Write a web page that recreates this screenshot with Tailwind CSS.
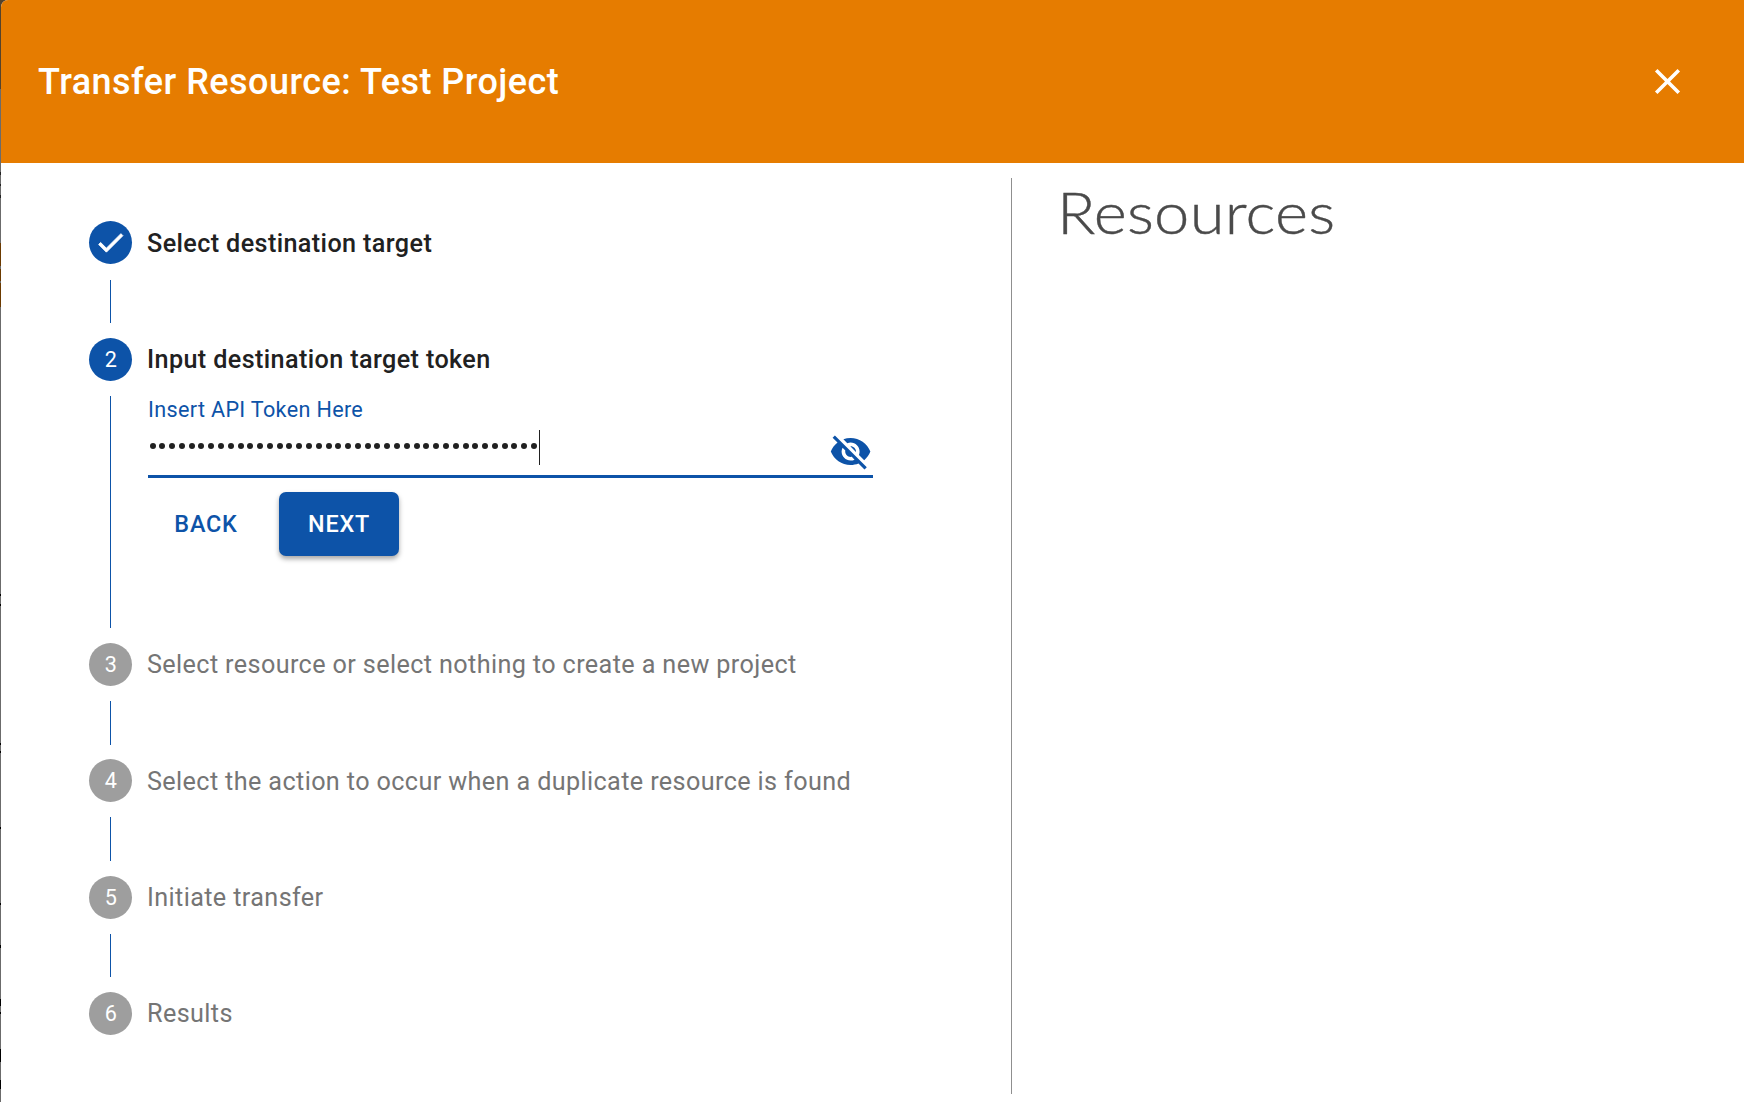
<!DOCTYPE html>
<html lang="en"><head><meta charset="utf-8"><title>Transfer Resource</title>
<script src="https://cdn.jsdelivr.net/npm/@tailwindcss/browser@4"></script></head>
<body class="h-[1102px] w-[1744px] overflow-hidden bg-[linear-gradient(#54432c_89px,#6b6b6b_89px_172px,#222_172px_175px,#6b6b6b_175px_184px,#222_184px_186px,#6b6b6b_186px_195px,#222_195px_198px,#6b6b6b_198px_243px,#6b3a00_243px_266px,#6b6b6b_266px_269px,#6b3a00_269px_281px,#6b6b6b_281px_283px,#6b3a00_283px_307px,#6b6b6b_307px_594px,#000_594px_596px,#6b6b6b_596px_604px,#000_604px_606px,#6b6b6b_606px_743px,#000_743px_745px,#6b6b6b_745px_751px,#000_751px_753px,#6b6b6b_753px_827px,#000_827px_829px,#6b6b6b_829px_903px,#000_903px_905px,#6b6b6b_905px_945px,#000_945px_948px,#6b6b6b_948px_999px,#000_999px_1006px,#6b6b6b_1006px_1012px,#000_1012px_1014px,#6b6b6b_1014px_1049px,#000_1049px_1062px,#6b6b6b_1062px_1080px,#000_1080px_1089px,#6b6b6b_1089px)] pl-px font-['Roboto',sans-serif]">
<div class="flex h-full flex-col overflow-hidden rounded-tl-[7px] bg-white">
<header class="flex h-[163px] shrink-0 items-center justify-between bg-[#e67c00] pr-[55.5px] pl-[37px] text-white">
<h1 class="text-[36px] leading-none font-medium tracking-[0.47px]">Transfer Resource: Test Project</h1>
<svg class="size-[43px]" viewBox="0 0 24 24" fill="currentColor"><path d="M19 6.41 17.59 5 12 10.59 6.41 5 5 6.41 10.59 12 5 17.59 6.41 19 12 13.41 17.59 19 19 17.59 13.41 12z"/></svg>
</header>
<main class="flex grow">
<section class="flex w-[1010px] flex-col pt-[58px] pl-[88px] text-[25.2px] leading-[43px] tracking-[0.38px] text-[#757575]">
<div class="flex h-[117px]">
<div class="flex w-[43px] flex-col items-center"><span class="flex size-[43.2px] items-center justify-center rounded-full bg-[#0d53a8] text-white"><svg class="size-[33px]" viewBox="0 0 24 24" fill="currentColor" stroke="currentColor" stroke-width=".7"><path d="M9 16.17 4.83 12l-1.42 1.41L9 19 21 7l-1.41-1.41z"/></svg></span><i class="mt-4 h-[43px] w-px bg-[#0d53a8]"></i></div>
<span class="ml-[15px] pt-px font-medium text-[#212121]">Select destination target</span></div>
<div class="flex h-[305px]">
<div class="flex w-[43px] flex-col items-center"><span class="size-[43px] rounded-full bg-[#0d53a8] pl-px text-center text-[21.6px] text-white">2</span><i class="mt-[15px] h-[232px] w-px bg-[#0d53a8]"></i></div>
<div class="ml-[15px]"><div class="font-medium text-[#212121]">Input destination target token</div>
<div class="ml-px flex h-[97px] w-[725px] justify-between border-b-3 border-[#0d53a8]">
<div><div class="mt-[14px] h-[29px] text-[21.6px] leading-[29px] tracking-[0.33px] text-[#0d53a8]">Insert API Token Here</div>
<div class="mt-[6px] flex h-[35px] items-center"><div class="flex gap-[3.79px] pb-[3px] pl-[1.5px]" id="dots"></div><i class="ml-[2.5px] h-[35px] w-px bg-[#212121]"></i></div></div>
<svg class="mt-[49px] mr-[0.5px] size-[43.2px]" viewBox="0 0 24 24" fill="#0d53a8"><path d="M12 7c2.76 0 5 2.24 5 5 0 .65-.13 1.26-.36 1.83l2.92 2.92c1.51-1.26 2.7-2.89 3.43-4.75-1.73-4.39-6-7.5-11-7.5-1.4 0-2.74.25-3.98.7l2.16 2.16C10.74 7.13 11.35 7 12 7M2 4.27l2.28 2.28.46.46C3.08 8.3 1.78 10.02 1 12c1.73 4.39 6 7.5 11 7.5 1.55 0 3.03-.3 4.38-.84l.42.42L19.73 22 21 20.73 3.27 3zM7.53 9.8l1.55 1.55c-.05.21-.08.43-.08.65 0 1.66 1.34 3 3 3 .22 0 .44-.03.65-.08l1.55 1.55c-.67.33-1.41.53-2.2.53-2.76 0-5-2.24-5-5 0-.79.2-1.53.53-2.2m4.31-.78 3.15 3.15.02-.16c0-1.66-1.34-3-3-3z"/></svg>
</div>
<div class="mt-[14px] flex text-[23.4px] font-medium tracking-[0.8px]"><button class="h-16 w-[118px] text-[#0d53a8]">BACK</button><button class="ml-[14px] h-16 w-[120px] rounded-[7px] bg-[#0d53a8] text-white shadow-[0_3px_5px_rgba(0,0,0,.35)]">NEXT</button></div>
</div></div>
<div class="flex h-[116px]">
<div class="flex w-[43px] flex-col items-center"><span class="size-[43px] rounded-full bg-[#9e9e9e] pl-px text-center text-[21.6px] text-white">3</span><i class="mt-[15px] h-[44px] w-px bg-[#0d53a8]"></i></div>
<span class="ml-[15px]">Select resource or select nothing to create a new project</span></div>
<div class="flex h-[117px]">
<div class="flex w-[43px] flex-col items-center"><span class="size-[43px] rounded-full bg-[#9e9e9e] pl-px text-center text-[21.6px] text-white">4</span><i class="mt-[15px] h-[44px] w-px bg-[#0d53a8]"></i></div>
<span class="ml-[15px] pt-px">Select the action to occur when a duplicate resource is found</span></div>
<div class="flex h-[116px]">
<div class="flex w-[43px] flex-col items-center"><span class="size-[43px] rounded-full bg-[#9e9e9e] pl-px text-center text-[21.6px] text-white">5</span><i class="mt-[15px] h-[43px] w-px bg-[#0d53a8]"></i></div>
<span class="ml-[15px]">Initiate transfer</span></div>
<div class="flex">
<span class="size-[43px] rounded-full bg-[#9e9e9e] pl-px text-center text-[21.6px] text-white">6</span>
<span class="ml-[15px]">Results</span></div>
</section>
<section class="mt-[15px] mb-2 grow border-l border-[#8f8f8f] pl-[45px]"><h2 class="origin-left scale-x-[1.1] font-['Lato',sans-serif] text-[57.6px] leading-[67px] font-light tracking-[0.2px] text-[#4a4a4a] [-webkit-text-stroke:0.4px_#4a4a4a]">Resources</h2></section>
</main></div>
<script>document.getElementById('dots').innerHTML='<b class="size-[6px] rounded-full bg-[#212121]"></b>'.repeat(40)</script>
</body></html>
